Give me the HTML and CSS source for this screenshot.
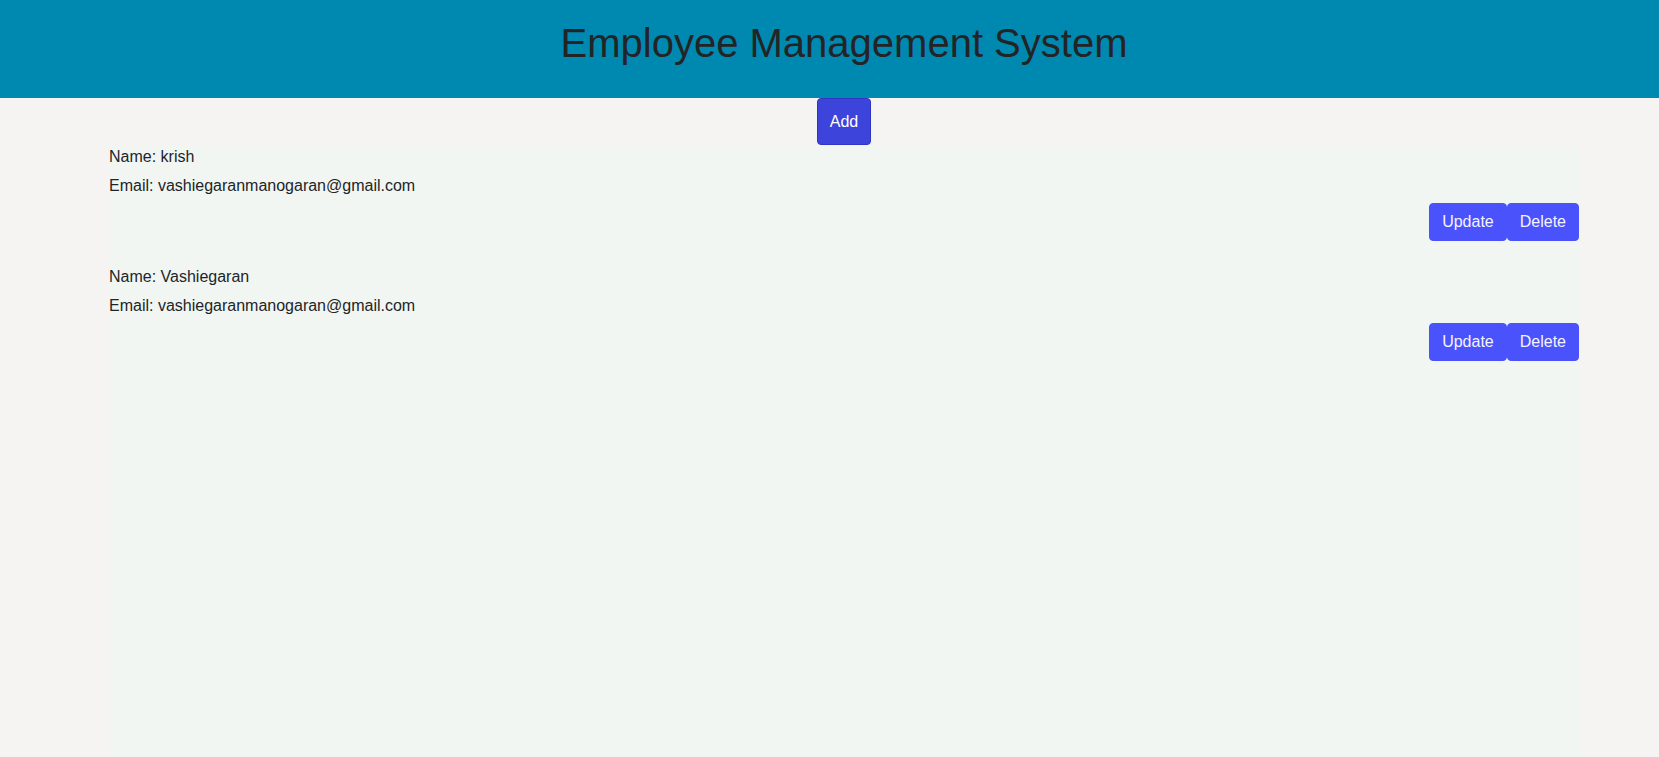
FILE: index.html
```html
<!DOCTYPE html>
<html lang="en">
<head>
<meta charset="utf-8">
<title>Employee Management System</title>
<link rel="stylesheet" href="styles.css">
</head>
<body>
  <header class="topbar">
    <h1 class="title">Employee Management System</h1>
  </header>
  <div class="add-row">
    <button class="btn-add">Add</button>
  </div>
  <main class="list">
    <div class="employee">
      <div class="line name">Name: krish</div>
      <div class="line email">Email: vashiegaranmanogaran@gmail.com</div>
      <div class="actions">
        <button class="btn">Update</button>
        <button class="btn">Delete</button>
      </div>
    </div>
    <div class="employee">
      <div class="line name">Name: Vashiegaran</div>
      <div class="line email">Email: vashiegaranmanogaran@gmail.com</div>
      <div class="actions">
        <button class="btn">Update</button>
        <button class="btn">Delete</button>
      </div>
    </div>
  </main>
</body>
</html>
```

FILE: styles.css
```css
html, body {
  margin: 0;
  padding: 0;
}

body {
  background: #f5f4f3;
  font-family: "Liberation Sans", Arial, sans-serif;
  font-size: 16px;
  color: #212529;
  height: 757px;
  overflow: hidden;
  display: flex;
  flex-direction: column;
}

.topbar {
  background: #0089b0;
  height: 98px;
  box-sizing: border-box;
  padding: 20px 0 0 29px;
  text-align: center;
}

.title {
  margin: 0;
  font-size: 40px;
  font-weight: 400;
  line-height: 46px;
  color: #222426;
}

.add-row {
  display: flex;
  justify-content: center;
  padding-left: 29px;
}

.btn-add {
  height: 47px;
  padding: 0 12px;
  border: 1px solid #2f36c4;
  border-radius: 4px;
  background: #3d44dc;
  color: #ffffff;
  font-family: "Liberation Sans", Arial, sans-serif;
  font-size: 16px;
  line-height: 18px;
}

.list {
  flex: 1;
  margin-left: 109px;
  width: 1470px;
  background: #f2f6f3;
}

.employee {
  padding-top: 3px;
  margin-bottom: 24px;
}

.line {
  line-height: 18px;
}

.name {
  margin-bottom: 11px;
}

.email {
  margin-bottom: 8px;
}

.actions {
  display: flex;
  justify-content: flex-end;
}

.btn {
  height: 38px;
  padding: 0 12px;
  border: 1px solid #4a52fc;
  border-radius: 4px;
  background: #4a52fc;
  color: #f4f4ff;
  font-family: "Liberation Sans", Arial, sans-serif;
  font-size: 16px;
  line-height: 18px;
}
```
